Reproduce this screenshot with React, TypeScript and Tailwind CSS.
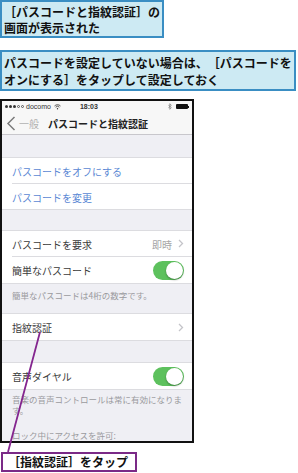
import type { ReactNode } from 'react'

function Chevron() {
  return (
    <svg width="6" height="9" viewBox="0 0 6 9" fill="none" stroke="#c4c4c9" strokeWidth={1.3}>
      <path d="M1 1l3.5 3.5L1 8" />
    </svg>
  )
}

function Toggle() {
  return (
    <div className="relative h-[19px] w-[31px] rounded-full bg-[#5dc15d]">
      <div className="absolute right-[1px] top-[1px] h-[17px] w-[17px] rounded-full bg-white shadow-[0_1px_2px_rgba(0,0,0,0.35)]" />
    </div>
  )
}

function Row({ children, right, inset = false }: { children: ReactNode; right?: ReactNode; inset?: boolean }) {
  return (
    <div className="flex h-[26px] items-stretch bg-white pl-[10px]">
      <div className={`flex flex-1 items-center justify-between pr-[8px] ${inset ? 'border-b border-[#dcdce0]' : ''}`}>
        <span className="pt-[2px] text-[10px] leading-none text-[#3a3a3a]">{children}</span>
        {right}
      </div>
    </div>
  )
}

function StatusBar() {
  return (
    <div className="flex h-[13px] items-center bg-[#f7f7f7] px-[3px] text-[7px] leading-none text-[#333]">
      <div className="flex items-center gap-[1px]">
        {[0, 1, 2].map((i) => (
          <span key={i} className="h-[3px] w-[3px] rounded-full bg-[#333]" />
        ))}
        {[0, 1].map((i) => (
          <span key={i} className="h-[3px] w-[3px] rounded-full border-[0.5px] border-[#555]" />
        ))}
      </div>
      <span className="ml-[2px] font-['Liberation_Sans',sans-serif]">docomo</span>
      <svg className="ml-[3px]" width="7" height="6" viewBox="0 0 7 6" fill="none" stroke="#333" strokeWidth={0.8}>
        <path d="M0.5 2a4.2 4.2 0 016 0M1.6 3.2a2.6 2.6 0 013.8 0" />
        <circle cx="3.5" cy="4.8" r="0.7" fill="#333" stroke="none" />
      </svg>
      <span className="ml-[19px] font-['Liberation_Sans',sans-serif] font-bold">18:03</span>
      <div className="ml-auto flex items-center gap-[4px]">
        <svg width="4" height="7" viewBox="0 0 4 7" fill="none" stroke="#777" strokeWidth={0.7}>
          <path d="M0.3 1.8l3 3-1.5 1.5V0.7l1.5 1.5-3 3" />
        </svg>
        <div className="flex items-center">
          <div className="h-[5px] w-[12px] rounded-[1px] bg-[#111]" />
          <div className="h-[2px] w-[1px] bg-[#111]" />
        </div>
      </div>
    </div>
  )
}

export default function App() {
  return (
    <div className="relative h-[473px] w-[298px] overflow-hidden bg-white font-['Noto_Sans_CJK_JP','Liberation_Sans',sans-serif] [text-spacing-trim:space-all]">
      <div className="flex flex-col items-start">
        <div className="w-fit border-2 border-[#3a8ec3] bg-[#cdeaf3] pb-0 pl-[2px] pr-[2px] pt-[2px] text-[12px] font-bold leading-[16px] text-[#111]">
          ［パスコードと指紋認証］の
          <br />
          画面が表示された
        </div>

        <div className="mt-[12px] w-[296px] border-2 border-[#3a8ec3] bg-[#cdeaf3] pb-[1px] pl-[2px] pt-[2px] text-[12px] font-bold leading-[17px] text-[#111]">
          パスコードを設定していない場合は、［パスコードを
          <br />
          オンにする］をタップして設定しておく
        </div>

        <div className="mt-[8px] flex h-[344px] w-[194px] flex-col overflow-hidden border-2 border-[#111] bg-[#efeff4]">
          <StatusBar />
          <div className="flex h-[26px] items-center border-b border-[#c8c7cc] bg-[#f7f7f7] pl-[4px]">
            <svg width="10" height="15" viewBox="0 0 10 15" fill="none" stroke="#7a7a7a" strokeWidth={1.5}>
              <path d="M8.5 1L2 7.5 8.5 14" />
            </svg>
            <span className="ml-[3px] pt-[1px] text-[10px] leading-none text-[#b0b0b0]">一般</span>
            <span className="ml-[9px] pt-[1px] text-[10px] font-bold leading-none text-[#222]">パスコードと指紋認証</span>
          </div>

          <div className="h-[22px] shrink-0" />
          <div className="border-y border-[#dcdce0]">
            <div className="flex h-[26px] bg-white pl-[10px]">
              <div className="flex flex-1 items-center border-b border-[#dcdce0]">
                <span className="pt-[2px] text-[10px] leading-none text-[#5b88d4]">パスコードをオフにする</span>
              </div>
            </div>
            <div className="flex h-[25px] items-center bg-white pl-[10px]">
              <span className="pt-[2px] text-[10px] leading-none text-[#5b88d4]">パスコードを変更</span>
            </div>
          </div>

          <div className="h-[20px] shrink-0" />
          <div className="border-y border-[#dcdce0]">
            <Row
              inset
              right={
                <div className="flex items-center gap-[6px]">
                  <span className="pt-[2px] text-[10px] leading-none text-[#a6a6a6]">即時</span>
                  <Chevron />
                </div>
              }
            >
              パスコードを要求
            </Row>
            <Row right={<Toggle />}>簡単なパスコード</Row>
          </div>
          <div className="h-[29px] shrink-0 pl-[10px] pt-[6px] text-[8.5px] leading-[11px] text-[#9a9a9e]">
            簡単なパスコードは4桁の数字です。
          </div>

          <div className="border-y border-[#dcdce0]">
            <Row right={<Chevron />}>指紋認証</Row>
          </div>

          <div className="h-[21px] shrink-0" />
          <div className="border-y border-[#dcdce0]">
            <Row right={<Toggle />}>音声ダイヤル</Row>
          </div>
          <div className="w-[184px] pl-[10px] pt-[4px] text-[8.5px] leading-[11px] text-[#9a9a9e]">
            音楽の音声コントロールは常に有効になります。
          </div>
          <div className="pl-[10px] pt-[14px] text-[8.5px] leading-[11px] text-[#9a9a9e]">ロック中にアクセスを許可:</div>
        </div>

        <div className="mt-[9px] ml-[1px] flex h-[20px] w-fit items-center border-2 border-[#7b2a87] bg-white pl-[5px] pr-[7px] text-[12px] font-bold leading-none text-[#111]">
          ［指紋認証］をタップ
        </div>
      </div>

      <svg className="pointer-events-none absolute left-0 top-0" width="298" height="473">
        <line x1="40" y1="332" x2="8" y2="452" stroke="#84268f" strokeWidth={1.8} />
      </svg>
    </div>
  )
}
